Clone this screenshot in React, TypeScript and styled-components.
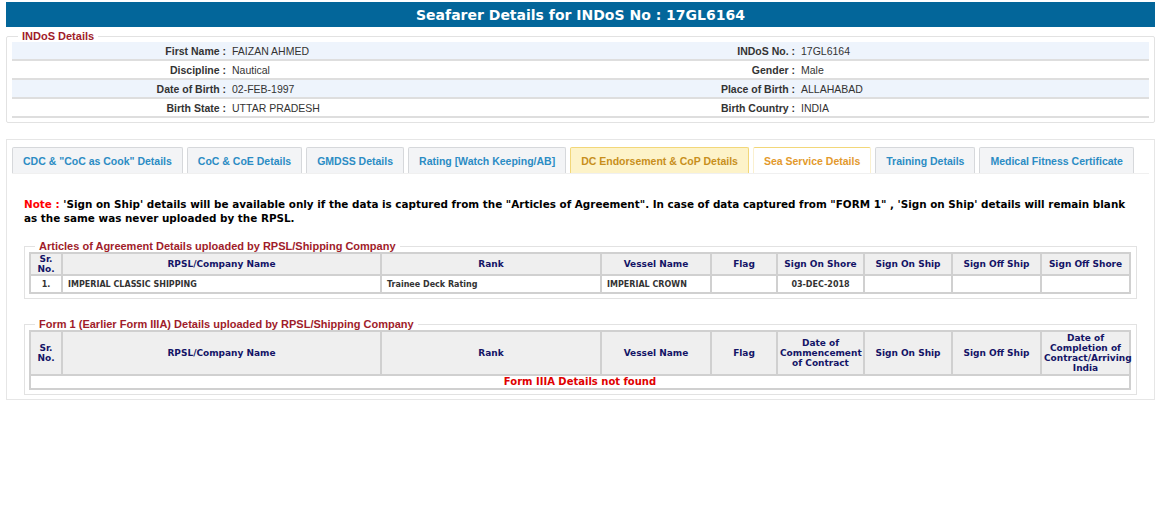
import styled, { createGlobalStyle } from 'styled-components';

const GlobalStyle = createGlobalStyle`
  html, body {
    margin: 0;
    padding: 0;
    background: #ffffff;
  }
  body {
    font-family: 'Liberation Sans', Arial, sans-serif;
  }
`;

const personal = [
  ['First Name', 'FAIZAN AHMED', 'INDoS No.', '17GL6164'],
  ['Discipline', 'Nautical', 'Gender', 'Male'],
  ['Date of Birth', '02-FEB-1997', 'Place of Birth', 'ALLAHABAD'],
  ['Birth State', 'UTTAR PRADESH', 'Birth Country', 'INDIA'],
];

const tabs = [
  { label: 'CDC & "CoC as Cook" Details', kind: 'normal' },
  { label: 'CoC & CoE Details', kind: 'normal' },
  { label: 'GMDSS Details', kind: 'normal' },
  { label: 'Rating [Watch Keeping/AB]', kind: 'normal' },
  { label: 'DC Endorsement & CoP Details', kind: 'hover' },
  { label: 'Sea Service Details', kind: 'active' },
  { label: 'Training Details', kind: 'normal' },
  { label: 'Medical Fitness Certificate', kind: 'normal' },
];

const colWidths = [32, 319, 220, 110, 66, 87, 88, 89, 89];

export default function App() {
  return (
    <>
      <GlobalStyle />
      <Page>
        <TitleBar>Seafarer Details for INDoS No : 17GL6164</TitleBar>

        <InfoFieldset>
          <InfoLegend>INDoS Details</InfoLegend>
          <InfoTable>
            <colgroup>
              <col style={{ width: 220 }} />
              <col style={{ width: 353 }} />
              <col style={{ width: 216 }} />
              <col />
            </colgroup>
            <tbody>
              {personal.map((r, i) => (
                <InfoRow key={r[0]} $shaded={i % 2 === 0}>
                  <InfoLabel>{r[0]} :</InfoLabel>
                  <InfoValue>{r[1]}</InfoValue>
                  <InfoLabel>{r[2]} :</InfoLabel>
                  <InfoValue>{r[3]}</InfoValue>
                </InfoRow>
              ))}
            </tbody>
          </InfoTable>
        </InfoFieldset>

        <TabPanel>
          <TabList>
            {tabs.map((t) => (
              <Tab key={t.label} $kind={t.kind}>
                {t.label}
              </Tab>
            ))}
          </TabList>

          <TabBody>
            <Note>
              <NoteRed>Note :</NoteRed>{' '}
              'Sign on Ship' details will be available only if the data is captured from the "Articles of
              Agreement". In case of data captured from "FORM 1" , 'Sign on Ship' details will remain blank
              as the same was never uploaded by the RPSL.
            </Note>

            <GridFieldset>
              <GridLegend>Articles of Agreement Details uploaded by RPSL/Shipping Company</GridLegend>
              <Grid>
                <colgroup>
                  {colWidths.map((w, i) => (
                    <col key={i} style={{ width: w }} />
                  ))}
                </colgroup>
                <thead>
                  <tr>
                    <Th $h={20}>Sr.<br />No.</Th>
                    <Th>RPSL/Company Name</Th>
                    <Th>Rank</Th>
                    <Th>Vessel Name</Th>
                    <Th>Flag</Th>
                    <Th>Sign On Shore</Th>
                    <Th>Sign On Ship</Th>
                    <Th>Sign Off Ship</Th>
                    <Th>Sign Off Shore</Th>
                  </tr>
                </thead>
                <tbody>
                  <tr>
                    <Td $center>1.</Td>
                    <Td>IMPERIAL CLASSIC SHIPPING</Td>
                    <Td>Trainee Deck Rating</Td>
                    <Td>IMPERIAL CROWN</Td>
                    <Td />
                    <Td $center>03-DEC-2018</Td>
                    <Td />
                    <Td />
                    <Td />
                  </tr>
                </tbody>
              </Grid>
            </GridFieldset>

            <GridFieldset>
              <GridLegend>Form 1 (Earlier Form IIIA) Details uploaded by RPSL/Shipping Company</GridLegend>
              <Grid>
                <colgroup>
                  {colWidths.map((w, i) => (
                    <col key={i} style={{ width: w }} />
                  ))}
                </colgroup>
                <thead>
                  <tr>
                    <Th $h={42}>Sr.<br />No.</Th>
                    <Th>RPSL/Company Name</Th>
                    <Th>Rank</Th>
                    <Th>Vessel Name</Th>
                    <Th>Flag</Th>
                    <Th>Date of Commencement of Contract</Th>
                    <Th>Sign On Ship</Th>
                    <Th>Sign Off Ship</Th>
                    <Th>Date of Completion of Contract/Arriving India</Th>
                  </tr>
                </thead>
                <tbody>
                  <tr>
                    <EmptyCell colSpan={9}>Form IIIA Details not found</EmptyCell>
                  </tr>
                </tbody>
              </Grid>
            </GridFieldset>
          </TabBody>
        </TabPanel>
      </Page>
    </>
  );
}

const Page = styled.div`
  padding: 2px 6px 0 6px;
`;

const TitleBar = styled.div`
  height: 25px;
  background-color: #03669a;
  color: #ffffff;
  font-family: 'DejaVu Sans', Verdana, sans-serif;
  font-weight: bold;
  font-size: 14px;
  display: flex;
  align-items: center;
  justify-content: center;
`;

const InfoFieldset = styled.fieldset`
  margin: 3px 0 0 0;
  padding: 0 5px 4px 5px;
  border: 1px solid #e2e2e2;
  border-radius: 2px;
`;

const InfoLegend = styled.legend`
  margin-left: 6px;
  padding: 0 4px;
  color: #a01c2a;
  font-family: 'Liberation Sans', Arial, sans-serif;
  font-size: 11px;
  font-weight: bold;
  line-height: 12px;
`;

const InfoTable = styled.table`
  width: 100%;
  border-collapse: collapse;
  table-layout: fixed;
  font-family: 'Liberation Sans', Arial, sans-serif;
  font-size: 10.5px;
  color: #333333;
`;

const InfoRow = styled.tr<{ $shaded: boolean }>`
  background-color: ${({ $shaded }) => ($shaded ? '#eef4fc' : '#ffffff')};
  border-bottom: 2px solid #dedede;
  td {
    height: 17px;
  }
`;

const InfoLabel = styled.td`
  text-align: right;
  font-weight: bold;
  padding: 0 6px 0 0;
  white-space: nowrap;
`;

const InfoValue = styled.td`
  padding: 0;
  white-space: nowrap;
`;

const TabPanel = styled.div`
  margin-top: 16px;
  border: 1px solid #e6e6e6;
  padding: 7px 5px 4px 5px;
`;

const TabList = styled.div`
  display: flex;
  gap: 4px;
  border-bottom: 1px solid #f0f0f0;
`;

const Tab = styled.div<{ $kind: string }>`
  height: 25px;
  padding: 0 10px;
  display: flex;
  align-items: center;
  white-space: nowrap;
  font-family: 'Liberation Sans', Arial, sans-serif;
  font-size: 10.5px;
  font-weight: bold;
  border: 1px solid
    ${({ $kind }) => ($kind === 'normal' ? '#d6d8db' : '#f2d779')};
  border-bottom: none;
  border-radius: 2px 2px 0 0;
  background-color: ${({ $kind }) =>
    $kind === 'normal' ? '#f3f4f6' : $kind === 'hover' ? '#fdf3c9' : '#ffffff'};
  color: ${({ $kind }) =>
    $kind === 'normal' ? '#2b8cc4' : $kind === 'hover' ? '#c88f1c' : '#e39a2d'};
  border-left-color: ${({ $kind }) => ($kind === 'active' ? '#faf0cf' : undefined)};
  border-right-color: ${({ $kind }) => ($kind === 'active' ? '#faf0cf' : undefined)};
`;

const TabBody = styled.div`
  padding: 0 12px 0 12px;
`;

const Note = styled.p`
  margin: 23px 0 0 0;
  padding: 0;
  font-family: 'DejaVu Sans', Verdana, sans-serif;
  font-size: 10.4px;
  font-weight: bold;
  line-height: 14px;
  color: #000000;
`;

const NoteRed = styled.span`
  color: #ff0000;
`;

const GridFieldset = styled.fieldset`
  margin: 15px 0 0 0;
  padding: 0 4px 4px 4px;
  border: 1px solid #e2e2e2;
  & + & {
    margin-top: 19px;
  }
`;

const GridLegend = styled.legend`
  margin-left: 6px;
  padding: 0 4px;
  color: #a01c2a;
  font-family: 'Liberation Sans', Arial, sans-serif;
  font-size: 11px;
  font-weight: bold;
  line-height: 12px;
`;

const Grid = styled.table`
  width: 1100px;
  border-collapse: collapse;
  table-layout: fixed;
  border: 2px solid #cdcdcd;
  font-family: 'DejaVu Sans', Verdana, sans-serif;
`;

const Th = styled.th<{ $h?: number }>`
  height: ${({ $h }) => ($h ? `${$h}px` : 'auto')};
  background-color: #efefef;
  border: 2px solid #d0d0d0;
  color: #141466;
  font-size: 9px;
  font-weight: bold;
  line-height: 10px;
  text-align: center;
  padding: 0 2px;
`;

const Td = styled.td<{ $center?: boolean }>`
  height: 16px;
  border: 2px solid #d0d0d0;
  color: #333333;
  font-size: 8px;
  font-weight: bold;
  padding: 0 5px;
  text-align: ${({ $center }) => ($center ? 'center' : 'left')};
`;

const EmptyCell = styled.td`
  height: 12px;
  border: 2px solid #d0d0d0;
  color: #e00000;
  font-size: 10px;
  font-weight: bold;
  text-align: center;
  padding: 0;
  line-height: 12px;
`;
